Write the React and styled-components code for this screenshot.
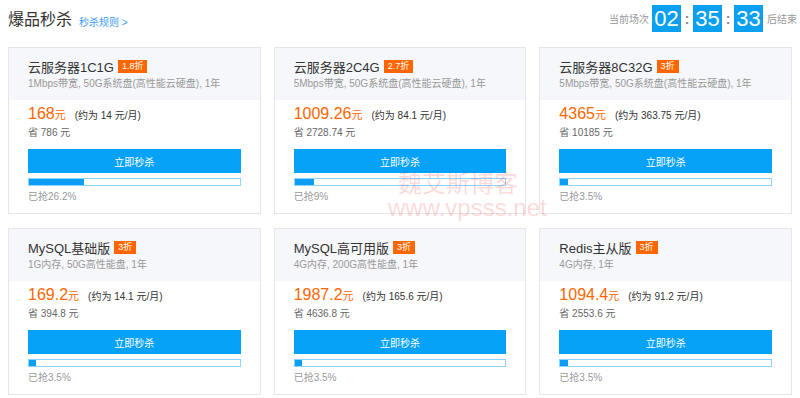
import React from 'react';
import styled, { createGlobalStyle } from 'styled-components';

const GlobalStyle = createGlobalStyle`
  body {
    margin: 0;
    background: #fff;
    font-family: 'Liberation Sans', 'Noto Sans CJK SC', sans-serif;
    color: #333;
  }
`;

const Page = styled.div`
  position: relative;
  padding: 0 8px;
  width: 800px;
  height: 398px;
  box-sizing: border-box;
  overflow: hidden;
`;

const TopBar = styled.div`
  display: flex;
  align-items: center;
  height: 37px;
  margin-bottom: 10px;
`;

const Heading = styled.h2`
  margin: 0;
  font-size: 16px;
  font-weight: normal;
  color: #333;
  line-height: 20px;
  padding-top: 2px;
`;

const RuleLink = styled.a`
  margin-left: 7px;
  margin-top: 6px;
  font-size: 10px;
  color: #3a9cf0;
  text-decoration: none;
`;

const Countdown = styled.div`
  margin-left: auto;
  margin-right: -5px;
  display: flex;
  align-items: center;
  font-size: 10px;
  color: #999;
`;

const TimeBox = styled.span`
  display: inline-flex;
  align-items: center;
  justify-content: center;
  width: 29px;
  height: 27px;
  background: #0aa0f0;
  color: #fff;
  font-size: 22px;
  margin-left: ${p => p.$left || 0}px;
  margin-right: ${p => p.$right || 0}px;
`;

const Colon = styled.span`
  width: 12px;
  text-align: center;
  font-size: 14px;
  font-weight: bold;
  color: #888;
`;

const Grid = styled.div`
  display: grid;
  grid-template-columns: repeat(3, 1fr);
  column-gap: 13px;
  row-gap: 14px;
`;

const Card = styled.div`
  border: 1px solid #e6e6e6;
  background: #fff;
`;

const CardHead = styled.div`
  background: #f5f7fa;
  padding: 8px 19px 8px;
`;

const TitleRow = styled.div`
  display: flex;
  align-items: center;
  height: 20px;
`;

const Title = styled.span`
  font-size: 13px;
  color: #333;
`;

const Badge = styled.span`
  margin-left: 4px;
  background: #ff6600;
  color: #fff;
  font-size: 9px;
  line-height: 13px;
  height: 13px;
  padding: 0 4px;
`;

const Desc = styled.div`
  font-size: 10px;
  line-height: 16px;
  color: #999;
`;

const CardBody = styled.div`
  padding: 4px 19px 6px;
`;

const PriceRow = styled.div`
  display: flex;
  align-items: baseline;
  height: 20px;
  line-height: 20px;
`;

const Price = styled.span`
  font-size: 16px;
  color: #ff6600;
`;

const Unit = styled.span`
  font-size: 11px;
  color: #ff6600;
  margin-right: 9px;
`;

const Monthly = styled.span`
  font-size: 10px;
  color: #333;
`;

const Save = styled.div`
  font-size: 10px;
  line-height: 18px;
  color: #666;
`;

const BuyButton = styled.button`
  display: block;
  width: 100%;
  height: 24px;
  margin-top: 7px;
  border: none;
  background: #06a2f8;
  color: #fff;
  font-family: inherit;
  font-size: 10px;
  cursor: pointer;
`;

const Track = styled.div`
  margin-top: 5px;
  height: 8px;
  box-sizing: border-box;
  border: 1px solid #8ed2ff;
  background: #fff;
`;

const Fill = styled.div`
  height: 100%;
  background: #0a9ef5;
`;

const Sold = styled.div`
  margin-top: 1px;
  font-size: 10px;
  line-height: 20px;
  color: #999;
`;

const Watermark = styled.div`
  position: absolute;
  left: 388px;
  top: 172px;
  color: rgba(240, 60, 60, 0.2);
  font-size: 24px;
  line-height: 24px;
  pointer-events: none;
`;

const WatermarkCn = styled.div`
  padding-left: 10px;
`;

const deals = [
  { name: '云服务器1C1G', off: '1.8折', desc: '1Mbps带宽, 50G系统盘(高性能云硬盘), 1年', price: '168', month: '14', save: '786', pct: 26.2 },
  { name: '云服务器2C4G', off: '2.7折', desc: '5Mbps带宽, 50G系统盘(高性能云硬盘), 1年', price: '1009.26', month: '84.1', save: '2728.74', pct: 9 },
  { name: '云服务器8C32G', off: '3折', desc: '5Mbps带宽, 50G系统盘(高性能云硬盘), 1年', price: '4365', month: '363.75', save: '10185', pct: 3.5 },
  { name: 'MySQL基础版', off: '3折', desc: '1G内存, 50G高性能盘, 1年', price: '169.2', month: '14.1', save: '394.8', pct: 3.5 },
  { name: 'MySQL高可用版', off: '3折', desc: '4G内存, 200G高性能盘, 1年', price: '1987.2', month: '165.6', save: '4636.8', pct: 3.5 },
  { name: 'Redis主从版', off: '3折', desc: '4G内存, 1年', price: '1094.4', month: '91.2', save: '2553.6', pct: 3.5 },
];

function DealCard({ deal }) {
  return (
    <Card>
      <CardHead>
        <TitleRow>
          <Title>{deal.name}</Title>
          <Badge>{deal.off}</Badge>
        </TitleRow>
        <Desc>{deal.desc}</Desc>
      </CardHead>
      <CardBody>
        <PriceRow>
          <Price>{deal.price}</Price>
          <Unit>元</Unit>
          <Monthly>(约为 {deal.month} 元/月)</Monthly>
        </PriceRow>
        <Save>省 {deal.save} 元</Save>
        <BuyButton>立即秒杀</BuyButton>
        <Track>
          <Fill style={{ width: deal.pct + '%' }} />
        </Track>
        <Sold>已抢{deal.pct}%</Sold>
      </CardBody>
    </Card>
  );
}

export default function App() {
  return (
    <>
      <GlobalStyle />
      <Page>
        <TopBar>
          <Heading>爆品秒杀</Heading>
          <RuleLink href="#">秒杀规则 &gt;</RuleLink>
          <Countdown>
            <span>当前场次</span>
            <TimeBox $left={3}>02</TimeBox>
            <Colon>:</Colon>
            <TimeBox>35</TimeBox>
            <Colon>:</Colon>
            <TimeBox $right={4}>33</TimeBox>
            <span>后结束</span>
          </Countdown>
        </TopBar>
        <Grid>
          {deals.map(d => (
            <DealCard deal={d} key={d.name} />
          ))}
        </Grid>
        <Watermark>
          <WatermarkCn>魏艾斯博客</WatermarkCn>
          <div>www.vpsss.net</div>
        </Watermark>
      </Page>
    </>
  );
}
